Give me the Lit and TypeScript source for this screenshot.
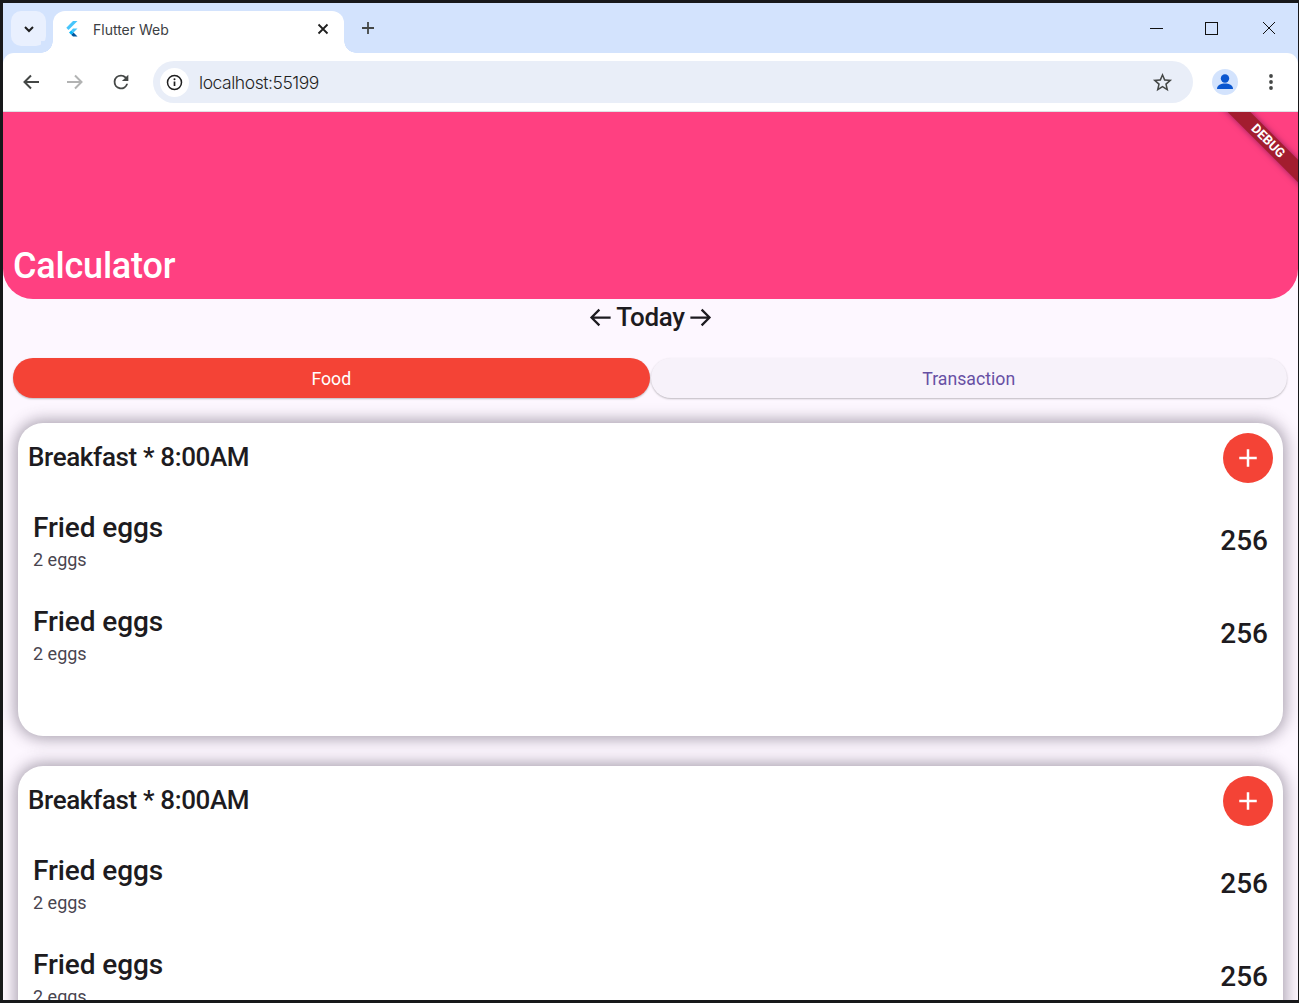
import { LitElement, html, css } from "lit";
import { customElement } from "lit/decorators.js";

const food = () => html`
  <div class="food">
    <div class="food-text"><div class="food-name">Fried eggs</div><div class="food-sub">2 eggs</div></div>
    <div class="food-val">256</div>
  </div>`;

const card = () => html`
  <section class="card">
    <div class="card-head">
      <div class="card-title">Breakfast * 8:00AM</div>
      <div class="fab"><svg width="30" height="30" viewBox="0 0 24 24"><path d="M19 13h-6v6h-2v-6H5v-2h6V5h2v6h6v2z" fill="#fff"/></svg></div>
    </div>
    <div class="foods">${food()}${food()}</div>
  </section>`;

@customElement("app-root")
export class AppRoot extends LitElement {
  static styles = css`
    :host { display: block; width: 1299px; height: 1003px; overflow: hidden; background: #17181a; font-family: Roboto, sans-serif; }
    .win { margin: 3px 1px 3px 3px; height: 997px; display: flex; flex-direction: column; overflow: hidden; position: relative; background: #fdf7ff; }
    .strip { height: 50px; flex: none; background: #d3e3fd; display: flex; position: relative; }
    .tabsearch { width: 35px; height: 35px; margin: 8px 0 0 8px; border-radius: 10px; background: #e9f0fe; display: flex; align-items: center; justify-content: center; flex: none; }
    .tab { width: 291px; height: 42px; margin: 8px 0 0 7px; background: #fff; border-radius: 12px 12px 0 0; display: flex; align-items: center; padding: 0 15px 6px 11px; box-sizing: border-box; flex: none; position: relative; }
    .tab::before, .tab::after { content: ""; position: absolute; bottom: 0; width: 12px; height: 12px; }
    .tab::before { left: -12px; background: radial-gradient(circle at 0 0, #d3e3fd 11.5px, #fff 12px); }
    .tab::after { right: -12px; background: radial-gradient(circle at 100% 0, #d3e3fd 11.5px, #fff 12px); }
    .tab-title { color: #3c4043; margin-left: 13px; flex: 1; font-family: Inter, "Noto Sans", sans-serif; font-size: 14px; }
    .newtab { margin: 14px 0 0 14px; width: 20px; height: 22px; display: flex; align-items: center; justify-content: center; }
    .wc { margin-left: auto; display: flex; align-items: center; height: 50px; }
    .wc div { width: 58px; display: flex; justify-content: center; }
    .wc div:first-child { width: 52px; }
    .strip-bg { background: #d3e3fd; flex: none; }
    .toolbar { height: 59px; background: #fff; border-radius: 11px 11px 0 0; display: flex; align-items: center; box-sizing: border-box; border-bottom: 1px solid #dfe1e5; }
    .nav { width: 44px; display: flex; justify-content: center; flex: none; }
    .nav.back { margin-left: 6px; }
    .nav.reload { margin-left: 2px; }
    .omni { width: 1040px; height: 42px; margin-left: 10px; background: #e9eef8; border-radius: 21px; display: flex; align-items: center; padding: 0 19px 0 7px; box-sizing: border-box; flex: none; }
    .info { width: 29px; height: 29px; border-radius: 50%; background: #fff; display: flex; align-items: center; justify-content: center; flex: none; }
    .url { flex: 1; margin-left: 10px; font-family: Inter, sans-serif; font-size: 17.5px; font-weight: 300; letter-spacing: -0.45px; color: #1f1f1f; }
    .avatar { width: 26px; height: 26px; margin-left: 19px; border-radius: 50%; background: #d3e3fd; flex: none; display: block; }
    .kebab { margin-left: 31px; display: flex; }
    .page { flex: 1; min-height: 0; position: relative; overflow: hidden; }
    .hero { height: 187px; background: #ff4081; border-radius: 0 0 30px 30px; display: flex; align-items: flex-end; padding: 0 10px 13px; box-sizing: border-box; }
    .hero h1 { margin: 0 0 -2px; font-size: 36px; line-height: 44px; font-weight: 500; color: #fff; letter-spacing: -0.2px; }
    .today { height: 36px; display: flex; align-items: center; justify-content: center; gap: 2px; color: #1d1b20; font-size: 26px; font-weight: 500; line-height: 36px; letter-spacing: -0.35px; }
    .today svg { display: block; }
    .switch { display: flex; gap: 1px; margin: 23px 11px 0 10px; }
    .seg { flex: 1; height: 40px; border-radius: 20px; display: flex; align-items: center; justify-content: center; font-size: 17.7px; box-shadow: 0 1px 2px rgba(0,0,0,.25); padding-top: 1px; box-sizing: border-box; }
    .seg.on { background: #f44336; color: #fff; }
    .seg.off { background: #f7f2fa; color: #6750a4; }
    .cards { padding: 25px 15px 0; display: flex; flex-direction: column; gap: 30px; }
    .card { height: 313px; flex: none; background: #fff; border-radius: 25px; box-shadow: 0 0 15px 3px rgba(70,60,80,.45); padding: 10px 10px 0; box-sizing: border-box; }
    .card-head { display: flex; justify-content: space-between; align-items: flex-start; height: 50px; }
    .card-title { font-size: 26px; line-height: 48px; font-weight: 500; letter-spacing: -0.36px; color: #1d1b20; }
    .fab { width: 50px; height: 50px; border-radius: 50%; background: #f44336; display: flex; align-items: center; justify-content: center; }
    .foods { padding: 12px 5px 0; }
    .food { height: 93.5px; display: flex; justify-content: space-between; align-items: center; }
    .food-text { margin-top: -1px; }
    .food-name { font-size: 28px; line-height: 38px; font-weight: 500; color: #1d1b20; letter-spacing: -0.1px; }
    .food-sub { font-size: 18px; line-height: 26px; color: #49454f; }
    .food-val { font-size: 28px; line-height: 40px; font-weight: 500; color: #1d1b20; margin-bottom: 2px; }
    .ribbon { position: absolute; top: 0; right: 0; width: 80px; height: 80px; overflow: hidden; pointer-events: none; }
    .ribbon div { position: absolute; width: 120px; height: 16px; left: -10px; top: 21px; transform: rotate(45deg); background: #a31d2f; color: #fff; font-size: 13px; font-weight: 700; line-height: 16px; text-align: center; box-shadow: 0 0 6px rgba(60,0,60,.55); }
  `;

  render() {
    return html`
      <div class="win">
        <div class="strip">
          <div class="tabsearch"><svg width="14" height="14" viewBox="0 0 14 14"><path d="M3 5l4 4 4-4" fill="none" stroke="#1f1f1f" stroke-width="2"/></svg></div>
          <div class="tab">
            <svg width="16" height="18" viewBox="0 0 16 18">
              <path d="M9 1h4.500L4.500 10 2.300 7.800z" fill="#47c5fb"/>
              <path d="M9 8.600h4.500L9.500 12.600 7.200 10.400z" fill="#47c5fb"/>
              <path d="M7.200 14.800l2.300-2.200 4 4H9z" fill="#00569e"/>
              <path d="M5 12.600l2.200-2.200 2.300 2.200-2.300 2.200z" fill="#00b5f8"/>
            </svg>
            <span class="tab-title">Flutter Web</span>
            <svg width="12" height="12" viewBox="0 0 12 12"><path d="M1.500 1.500l9 9M10.500 1.500l-9 9" stroke="#1f1f1f" stroke-width="1.800"/></svg>
          </div>
          <div class="newtab"><svg width="14" height="14" viewBox="0 0 14 14"><path d="M7 1v12M1 7h12" stroke="#444746" stroke-width="1.800"/></svg></div>
          <div class="wc">
            <div><svg width="13" height="13" viewBox="0 0 13 13"><path d="M0 6.500h13" stroke="#111" stroke-width="1"/></svg></div>
            <div><svg width="13" height="13" viewBox="0 0 13 13"><rect x=".5" y=".5" width="12" height="12" fill="none" stroke="#111"/></svg></div>
            <div><svg width="14" height="14" viewBox="0 0 14 14"><path d="M1 1l12 12M13 1L1 13" stroke="#111" stroke-width="1"/></svg></div>
          </div>
        </div>
        <div class="strip-bg">
          <div class="toolbar">
            <div class="nav back"><svg width="20" height="20" viewBox="0 0 20 20"><path d="M18 10H3.500M10 3.500L3.500 10l6.500 6.500" fill="none" stroke="#444746" stroke-width="2"/></svg></div>
            <div class="nav"><svg width="20" height="20" viewBox="0 0 20 20"><path d="M2 10h14.500M10 3.500l6.500 6.500-6.500 6.500" fill="none" stroke="#b2b3b3" stroke-width="2"/></svg></div>
            <div class="nav reload"><svg width="22" height="22" viewBox="0 0 24 24"><path d="M17.650 6.350A7.960 7.960 0 0 0 12 4a8 8 0 1 0 7.730 10h-2.080A6 6 0 1 1 12 6c1.660 0 3.140.69 4.220 1.780L13 11h7V4z" fill="#444746"/></svg></div>
            <div class="omni">
              <div class="info"><svg width="17" height="17" viewBox="0 0 17 17"><circle cx="8.500" cy="8.500" r="7" fill="none" stroke="#1f1f1f" stroke-width="1.500"/><path d="M8.500 7.500v4.500" stroke="#1f1f1f" stroke-width="1.700"/><circle cx="8.500" cy="5.200" r="1" fill="#1f1f1f"/></svg></div>
              <span class="url">localhost:55199</span>
              <svg width="23" height="23" viewBox="0 0 24 24"><path d="M22 9.240l-7.190-.62L12 2 9.190 8.630 2 9.240l5.460 4.730L5.820 21 12 17.270 18.180 21l-1.630-7.030L22 9.240zM12 15.400l-3.760 2.270 1-4.280-3.320-2.880 4.380-.38L12 6.100l1.710 4.040 4.380.38-3.320 2.880 1 4.280L12 15.400z" fill="#444746"/></svg>
            </div>
            <svg class="avatar" viewBox="0 0 26 26"><circle cx="13" cy="9.500" r="4.200" fill="#0b57d0"/><path d="M5 20c0-4 4-5.500 8-5.500s8 1.500 8 5.500z" fill="#0b57d0"/></svg>
            <div class="kebab"><svg width="4" height="18" viewBox="0 0 4 18"><circle cx="2" cy="3" r="1.900" fill="#444746"/><circle cx="2" cy="9" r="1.900" fill="#444746"/><circle cx="2" cy="15" r="1.900" fill="#444746"/></svg></div>
          </div>
        </div>
        <div class="page">
          <header class="hero"><h1>Calculator</h1></header>
          <div class="today">
            <svg width="27" height="27" viewBox="0 0 24 24"><path d="M21 12H4M11 5l-7 7 7 7" fill="none" stroke="#1d1b20" stroke-width="2"/></svg>
            <span>Today</span>
            <svg width="27" height="27" viewBox="0 0 24 24"><path d="M3 12h17M13 5l7 7-7 7" fill="none" stroke="#1d1b20" stroke-width="2"/></svg>
          </div>
          <div class="switch"><div class="seg on">Food</div><div class="seg off">Transaction</div></div>
          <div class="cards">${card()}${card()}</div>
          <div class="ribbon"><div>DEBUG</div></div>
        </div>
      </div>`;
  }
}
